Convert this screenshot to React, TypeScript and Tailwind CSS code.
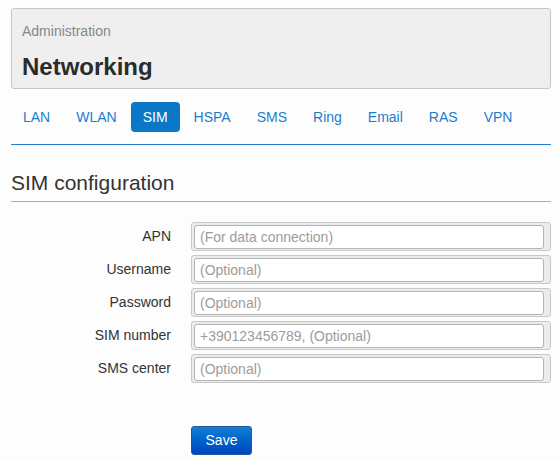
import { useState } from 'react';

const tabs = ['LAN', 'WLAN', 'SIM', 'HSPA', 'SMS', 'Ring', 'Email', 'RAS', 'VPN'];

const fields = [
  { label: 'APN', placeholder: '(For data connection)' },
  { label: 'Username', placeholder: '(Optional)' },
  { label: 'Password', placeholder: '(Optional)', type: 'password' },
  { label: 'SIM number', placeholder: '+390123456789, (Optional)' },
  { label: 'SMS center', placeholder: '(Optional)' },
];

export default function App() {
  const [active, setActive] = useState('SIM');

  return (
    <div className="min-h-[461px] w-[560px] bg-[#fdfdfd] pt-[8px] pr-[9px] pl-[11px] font-['Liberation_Sans',Arial,sans-serif] text-[#333]">
      <div className="rounded-[3px] border border-[#c6c6c6] bg-[#efefef] px-[10px] pt-[12px] pb-[6px]">
        <div className="text-[14px] leading-[20px] text-[#888]">Administration</div>
        <h1 className="mt-[11px] text-[24px] leading-[30px] font-bold text-[#2b2b2b]">
          Networking
        </h1>
      </div>

      <ul className="mt-[13px] flex gap-[2px] border-b border-[#1f7fd0] pb-[12px]">
        {tabs.map((tab) => (
          <li key={tab}>
            <button
              type="button"
              onClick={() => setActive(tab)}
              className={`rounded-[4px] px-[12px] py-[5px] text-[14px] leading-[20px] ${
                active === tab
                  ? 'bg-[#0a78c6] text-white'
                  : 'text-[#1c7dcd] hover:bg-[#eef5fb]'
              }`}
            >
              {tab}
            </button>
          </li>
        ))}
      </ul>

      <h2 className="mt-[24px] border-b border-[#aaa] pb-[4px] text-[21px] leading-[28px] text-[#333]">
        SIM configuration
      </h2>

      <div className="mt-[20px] flex flex-col gap-[4px]">
        {fields.map((f) => (
          <div key={f.label} className="flex items-center">
            <label className="w-[160px] shrink-0 text-right text-[14px] text-[#333]">
              {f.label}
            </label>
            <div className="ml-[20px] w-[360px] rounded-[3px] border border-[#c8c8c8] bg-[#ececec] pt-[2px] pr-[6px] pb-[1px] pl-[2px]">
              <input
                type={f.type ?? 'text'}
                placeholder={f.placeholder}
                className="block h-[24px] w-full rounded-[3px] border border-[#b4b4b4] bg-white px-[5px] text-[14px] text-[#333] outline-none placeholder:text-[#9c9c9c]"
              />
            </div>
          </div>
        ))}
      </div>

      <div className="mt-[43px] pl-[180px]">
        <button
          type="button"
          className="h-[29px] w-[61px] rounded-[3px] border border-[#2456a0] bg-gradient-to-b from-[#1580d4] to-[#0042c0] text-[14px] text-white"
        >
          Save
        </button>
      </div>
    </div>
  );
}
